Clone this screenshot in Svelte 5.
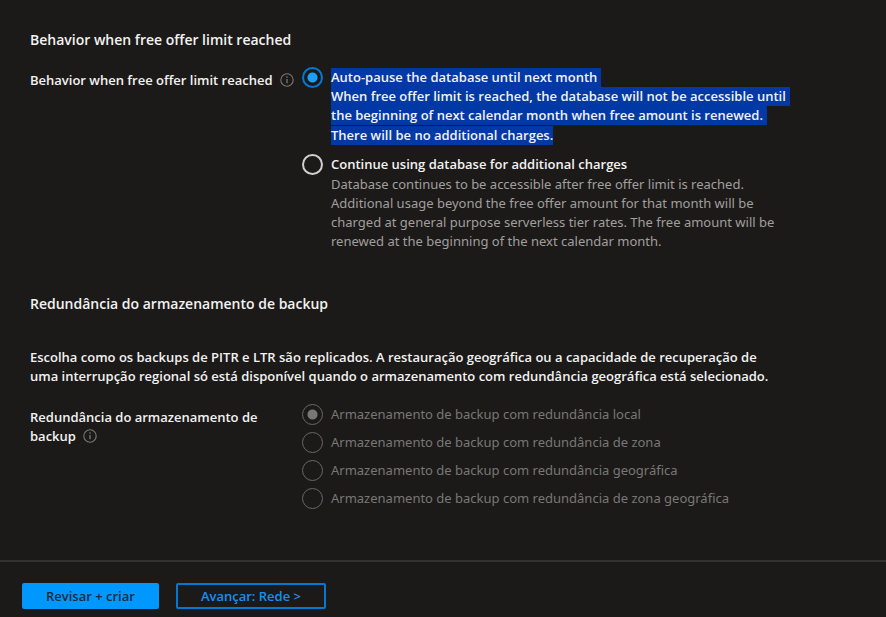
<script>
  let limitBehavior = $state('pause');
  let redundancy = $state('local');

  const pauseLines = [
    'Auto-pause the database until next month',
    'When free offer limit is reached, the database will not be accessible until',
    'the beginning of next calendar month when free amount is renewed.',
    'There will be no additional charges.'
  ];

  const redundancyOptions = [
    { value: 'local', label: 'Armazenamento de backup com redundância local' },
    { value: 'zone', label: 'Armazenamento de backup com redundância de zona' },
    { value: 'geo', label: 'Armazenamento de backup com redundância geográfica' },
    { value: 'geozone', label: 'Armazenamento de backup com redundância de zona geográfica' }
  ];
</script>

{#snippet info()}
  <svg class="info" viewBox="0 0 14 14" aria-hidden="true">
    <circle cx="7" cy="7" r="6.2" fill="none" stroke="currentColor" stroke-width="1.1" />
    <path d="M7 6v4.3" stroke="currentColor" stroke-width="1.3" />
    <circle cx="7" cy="4.1" r=".8" fill="currentColor" />
  </svg>
{/snippet}

<main>
  <section class="offer">
    <h2>Behavior when free offer limit reached</h2>
    <div class="field">
      <div class="name" id="limit-name">Behavior when free offer limit reached {@render info()}</div>
      <div class="options roomy" role="radiogroup" aria-labelledby="limit-name">
        <label>
          <input type="radio" name="limit" value="pause" bind:group={limitBehavior} />
          <span class="text">
            {#each pauseLines as line}<span class="line">{line}</span>{/each}
          </span>
        </label>
        <label>
          <input type="radio" name="limit" value="continue" bind:group={limitBehavior} />
          <span class="text">
            <strong>Continue using database for additional charges</strong>
            <span class="detail">
              Database continues to be accessible after free offer limit is reached.<br />
              Additional usage beyond the free offer amount for that month will be<br />
              charged at general purpose serverless tier rates. The free amount will be<br />
              renewed at the beginning of the next calendar month.
            </span>
          </span>
        </label>
      </div>
    </div>
  </section>

  <section class="backup">
    <h2>Redundância do armazenamento de backup</h2>
    <p>
      Escolha como os backups de PITR e LTR são replicados. A restauração geográfica ou a capacidade de recuperação de<br />
      uma interrupção regional só está disponível quando o armazenamento com redundância geográfica está selecionado.
    </p>
    <div class="field">
      <div class="name" id="redundancy-name">Redundância do armazenamento de<br />backup {@render info()}</div>
      <div class="options" role="radiogroup" aria-labelledby="redundancy-name">
        {#each redundancyOptions as option}
          <label class="disabled">
            <input type="radio" name="redundancy" value={option.value} bind:group={redundancy} disabled />
            <span class="text">{option.label}</span>
          </label>
        {/each}
      </div>
    </div>
  </section>
</main>

<footer>
  <button class="primary" type="button">Revisar + criar</button>
  <button class="secondary" type="button">Avançar: Rede &gt;</button>
</footer>

<style>
  :global(body) {
    margin: 0;
    background: #1b1a19;
    color: #f3f2f1;
    font: 600 13px/19px 'Open Sans', 'Noto Sans', sans-serif;
  }
  main {
    padding: 30px 30px 51px;
  }
  h2 {
    margin: 0;
    font-size: 14px;
    line-height: 20px;
    font-weight: 600;
  }
  .field {
    display: flex;
  }
  .name {
    flex: 0 0 272px;
    padding-top: 4px;
    white-space: nowrap;
  }
  .info {
    width: 14px;
    height: 14px;
    margin-left: 4px;
    vertical-align: -2px;
    color: #797775;
  }
  .options {
    display: flex;
    flex-direction: column;
    gap: 7px;
  }
  .roomy {
    gap: 9px;
  }
  label {
    display: flex;
    align-items: flex-start;
    gap: 8px;
    white-space: nowrap;
  }
  input {
    appearance: none;
    box-sizing: border-box;
    flex: none;
    width: 21px;
    height: 21px;
    margin: 0;
    border: 2px solid #d2d0ce;
    border-radius: 50%;
  }
  input:checked {
    border-color: #0078d4;
    background: radial-gradient(circle, #1a9fff 4.5px, transparent 5.5px);
  }
  input:disabled {
    border: 1px solid #6a6866;
  }
  input:disabled:checked {
    background: radial-gradient(circle, #797775 4.5px, transparent 5.5px);
  }
  .text {
    padding-top: 1px;
  }
  .line {
    display: block;
    width: fit-content;
    padding-right: 4px;
    background: #0039a6;
  }
  .line:last-child {
    padding-right: 0;
    margin-top: 1px;
  }
  strong {
    display: block;
    font-weight: 600;
  }
  .detail {
    display: block;
    padding-top: 1px;
    color: #a19f9d;
    font-family: 'Noto Sans', sans-serif;
    font-weight: 400;
  }
  .disabled {
    color: #797775;
    font-family: 'Noto Sans', sans-serif;
    font-weight: 400;
  }
  .offer .field {
    margin-top: 17px;
  }
  .backup {
    margin-top: 43px;
  }
  p {
    margin: 34px 0 18px;
    white-space: nowrap;
  }
  footer {
    display: flex;
    gap: 17px;
    padding: 21px 22px 8px;
    border-top: 2px solid #323130;
  }
  button {
    height: 26px;
    padding: 0 22px;
    border: 2px solid #0078d4;
    border-radius: 2px;
    font: inherit;
  }
  .primary {
    border-color: #0098ff;
    background: #0098ff;
    color: #1b2b3a;
  }
  .secondary {
    padding: 0 23px;
    background: transparent;
    color: #1490f5;
  }
</style>
